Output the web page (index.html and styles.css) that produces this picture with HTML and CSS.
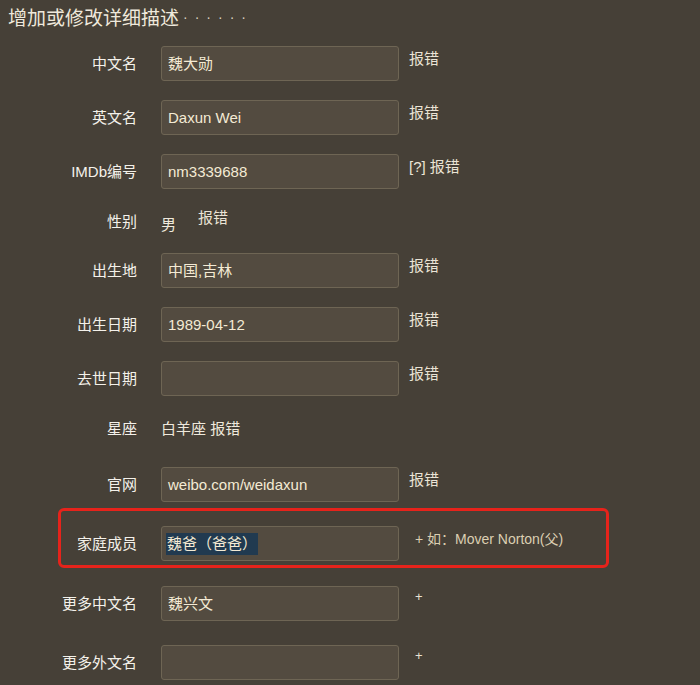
FILE: index.html
```html
<!DOCTYPE html>
<html lang="zh-CN">
<head>
<meta charset="utf-8">
<title>增加或修改详细描述</title>
<link rel="stylesheet" href="styles.css">
</head>
<body>
<h2 class="title">增加或修改详细描述<span class="dots">······</span></h2>
<form class="form">
  <div class="row">
    <label class="label">中文名</label>
    <div class="field">魏大勋</div>
    <a class="report">报错</a>
  </div>
  <div class="row">
    <label class="label">英文名</label>
    <div class="field">Daxun Wei</div>
    <a class="report">报错</a>
  </div>
  <div class="row">
    <label class="label">IMDb编号</label>
    <div class="field">nm3339688</div>
    <a class="report">[?] 报错</a>
  </div>
  <div class="row row-gender">
    <label class="label">性别</label>
    <span class="gender">男</span>
    <a class="report report-gender">报错</a>
  </div>
  <div class="row">
    <label class="label">出生地</label>
    <div class="field">中国,吉林</div>
    <a class="report">报错</a>
  </div>
  <div class="row">
    <label class="label">出生日期</label>
    <div class="field">1989-04-12</div>
    <a class="report">报错</a>
  </div>
  <div class="row">
    <label class="label">去世日期</label>
    <div class="field"></div>
    <a class="report">报错</a>
  </div>
  <div class="row row-star">
    <label class="label">星座</label>
    <span class="value">白羊座 报错</span>
  </div>
  <div class="row row-tight">
    <label class="label">官网</label>
    <div class="field">weibo.com/weidaxun</div>
    <a class="report">报错</a>
  </div>
  <div class="row row-highlight">
    <label class="label">家庭成员</label>
    <div class="field"><span class="selected">魏爸（爸爸）</span></div>
    <span class="hint">+ 如：Mover Norton(父)</span>
  </div>
  <div class="row row-wide">
    <label class="label">更多中文名</label>
    <div class="field">魏兴文</div>
    <a class="plus">+</a>
  </div>
  <div class="row">
    <label class="label">更多外文名</label>
    <div class="field"></div>
    <a class="plus">+</a>
  </div>
</form>
</body>
</html>
```
FILE: styles.css
```css
html, body {
  margin: 0;
  padding: 0;
  background: #464037;
}
body {
  font-family: "Liberation Sans", "Noto Sans CJK SC", sans-serif;
  color: #f2eee6;
  width: 700px;
  height: 685px;
  overflow: hidden;
}
.title {
  margin: 0;
  padding: 6px 8px 0;
  height: 23px;
  font-size: 19px;
  line-height: 23px;
  font-weight: normal;
  color: #efe9dc;
}
.dots {
  margin-left: 4px;
  font-size: 14px;
  letter-spacing: 7px;
  vertical-align: 3px;
  color: #d9d0c0;
}
.form {
  margin: 17px 0 0;
  display: flex;
  flex-direction: column;
}
.row {
  display: flex;
  align-items: center;
  margin-bottom: 19px;
}
.label {
  flex: none;
  width: 137px;
  text-align: right;
  font-size: 15px;
  line-height: 20px;
  color: #f4f1ea;
}
.field {
  flex: none;
  box-sizing: border-box;
  margin-left: 24px;
  width: 238px;
  height: 35px;
  padding: 0 6px;
  border: 1px solid #6e6554;
  border-radius: 3px;
  background: #534b40;
  font-size: 15px;
  line-height: 33px;
  color: #f4ead4;
  white-space: nowrap;
  overflow: hidden;
}
.report {
  align-self: flex-start;
  margin: 3px 0 0 10px;
  font-size: 15px;
  line-height: 20px;
  color: #ebe4d6;
}
.row-gender {
  height: 26px;
  align-items: flex-start;
}
.row-gender .label {
  margin-top: 4px;
}
.gender {
  margin: 7px 0 0 24px;
  font-size: 15px;
  line-height: 20px;
  color: #efe9dc;
}
.report-gender {
  margin: 0 0 0 22px;
}
.row-star {
  height: 33px;
  align-items: flex-start;
}
.row-star .label {
  padding-top: 4px;
}
.value {
  margin: 4px 0 0 24px;
  font-size: 15px;
  line-height: 20px;
  color: #efe9dc;
}
.row-tight {
  margin-bottom: 6px;
}
.row-highlight {
  box-sizing: border-box;
  margin: 0 0 18px 58px;
  width: 551px;
  height: 60px;
  padding: 15px 0 4px;
  border: 3px solid #e6231b;
  border-radius: 6px;
}
.row-highlight .label {
  width: 76px;
}
.row-wide {
  margin-bottom: 24px;
}
.selected {
  background: #213a50;
  color: #f4ead4;
  padding: 2px 1px 3px;
  margin-left: -2px;
}
.hint {
  align-self: flex-start;
  margin: 3px 0 0 16px;
  font-size: 14px;
  line-height: 20px;
  color: #dccfb2;
}
.plus {
  align-self: flex-start;
  margin: 3px 0 0 16px;
  font-size: 13px;
  line-height: 16px;
  color: #e8e1d3;
}
```
